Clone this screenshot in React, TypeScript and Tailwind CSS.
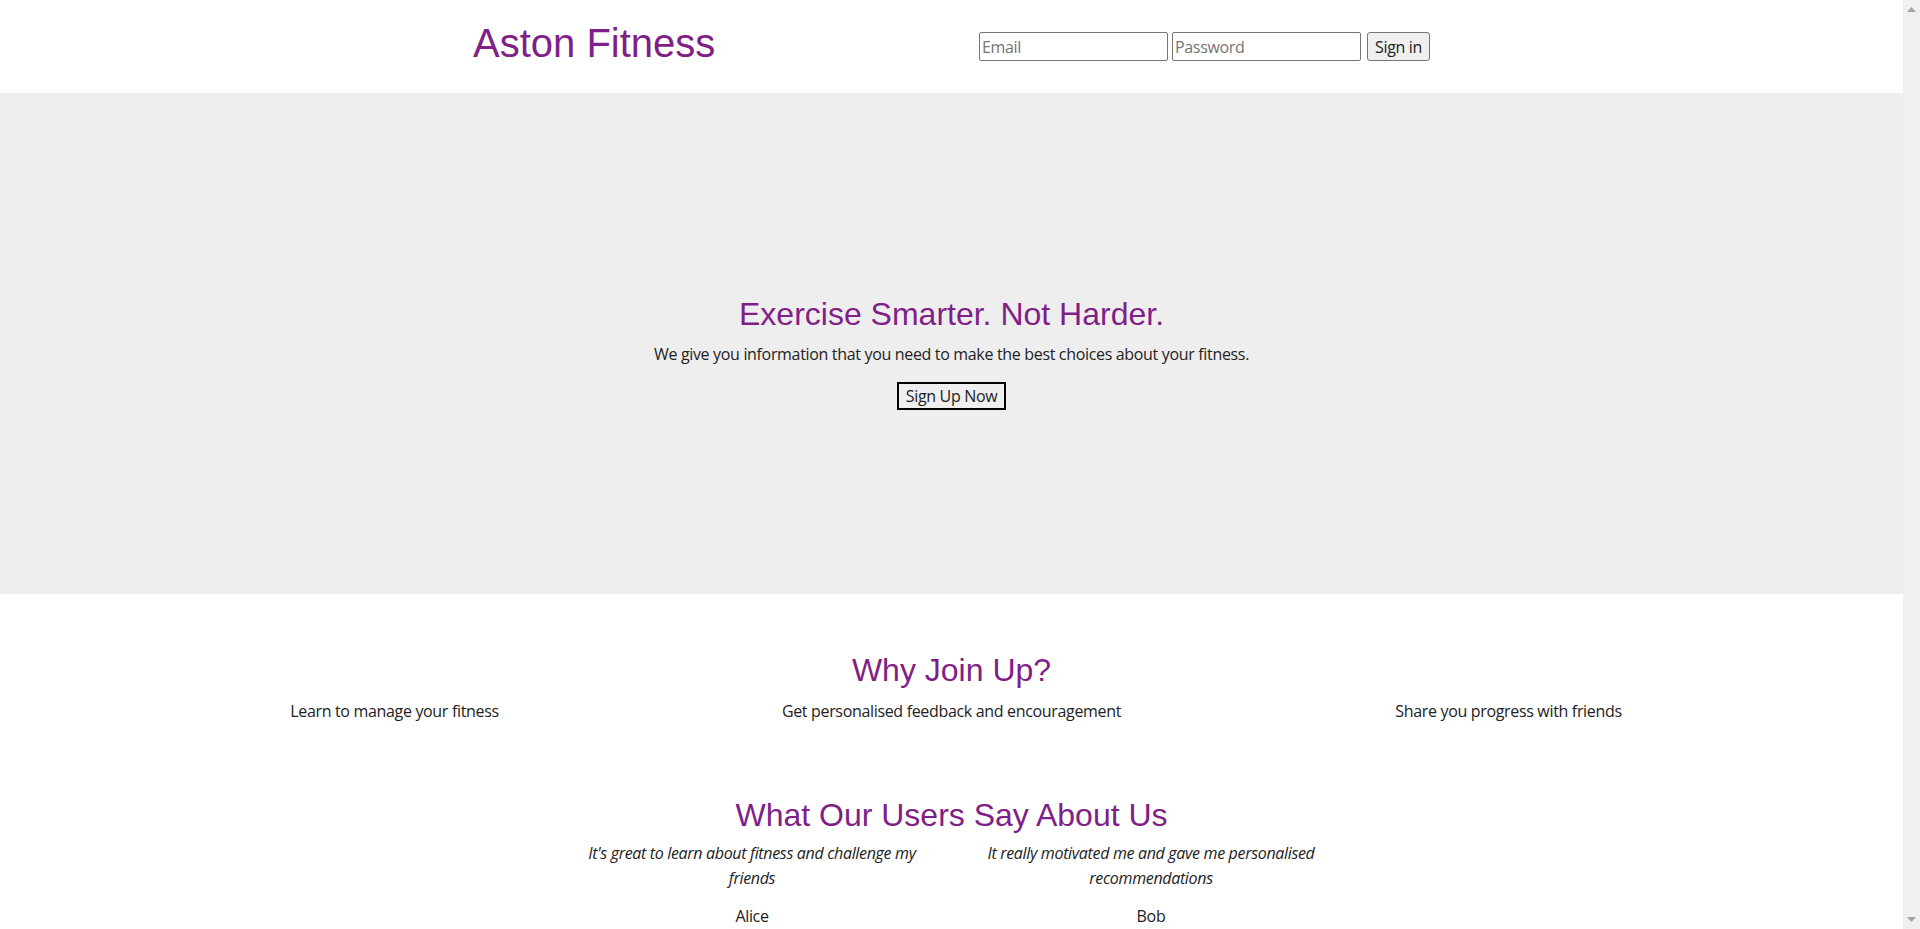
import React from "react";

const body = { fontFamily: '"Open Sans", "Noto Sans", sans-serif', letterSpacing: "-0.33px" };
const head = { fontFamily: '"Liberation Sans", Arial, sans-serif', letterSpacing: "0px" };

function Scrollbar() {
  return (
    <aside className="w-[17px] h-[929px] shrink-0 sticky top-0 bg-[#f0f0f0] flex flex-col justify-between items-center py-[7px]">
      <svg width="9" height="5" viewBox="0 0 9 5" aria-hidden="true">
        <path d="M4.5 0 L9 5 L0 5 Z" fill="#a3a3a3" />
      </svg>
      <svg width="9" height="5" viewBox="0 0 9 5" aria-hidden="true">
        <path d="M0 0 L9 0 L4.5 5 Z" fill="#a3a3a3" />
      </svg>
    </aside>
  );
}

export default function App() {
  return (
    <div className="flex bg-white">
      <main className="w-[1903px] shrink-0 min-h-[1100px] bg-white text-[#222222] text-[16px]" style={body}>
        <header className="h-[93px] bg-white">
          <div className="w-[957px] mx-auto h-full flex items-center justify-between">
            <h1 className="text-[40px] leading-none text-[#801f87] pb-[8px]" style={head}>
              Aston Fitness
            </h1>
            <form className="flex items-center gap-[4px]" onSubmit={(e) => e.preventDefault()}>
              <input
                type="email"
                placeholder="Email"
                style={body}
                className="w-[189px] h-[29px] border border-[#767676] rounded-[2px] px-[2px] text-[16px] placeholder-[#757575] bg-white"
              />
              <input
                type="password"
                placeholder="Password"
                style={body}
                className="w-[189px] h-[29px] border border-[#767676] rounded-[2px] px-[2px] text-[16px] placeholder-[#757575] bg-white"
              />
              <button
                style={body}
                className="w-[63px] h-[29px] border border-[#767676] rounded-[3px] bg-[#efefef] text-[16px] ml-[2px]"
              >
                Sign in
              </button>
            </form>
          </div>
        </header>

        <section className="h-[501px] bg-[#eeeeee] flex flex-col items-center justify-center pt-[18px]">
          <h2 className="text-[32px] leading-[37px] text-[#801f87]" style={head}>
            Exercise Smarter. Not Harder.
          </h2>
          <p className="mt-[9px] leading-[24px]">
            We give you information that you need to make the best choices about your fitness.
          </p>
          <button
            style={body}
            className="mt-[16px] h-[28px] w-[109px] border-2 border-black bg-[#efefef] leading-none text-[16px]"
          >
            Sign Up Now
          </button>
        </section>

        <section className="pt-[58px] text-center">
          <h2 className="text-[32px] leading-[37px] text-[#801f87]" style={head}>
            Why Join Up?
          </h2>
          <div className="w-[1671px] mx-auto grid grid-cols-3 mt-[10px] leading-[24px]">
            <p>Learn to manage your fitness</p>
            <p>Get personalised feedback and encouragement</p>
            <p>Share you progress with friends</p>
          </div>
        </section>

        <section className="pt-[74px] text-center">
          <h2 className="text-[32px] leading-[37px] text-[#801f87]" style={head}>
            What Our Users Say About Us
          </h2>
          <div className="w-[798px] mx-auto grid grid-cols-2 mt-[7px] leading-[25px]">
            <div className="px-[20px]">
              <p className="italic">It's great to learn about fitness and challenge my friends</p>
              <p className="mt-[13px]">Alice</p>
            </div>
            <div className="px-[20px]">
              <p className="italic">It really motivated me and gave me personalised recommendations</p>
              <p className="mt-[13px]">Bob</p>
            </div>
          </div>
        </section>
      </main>
      <Scrollbar />
    </div>
  );
}
